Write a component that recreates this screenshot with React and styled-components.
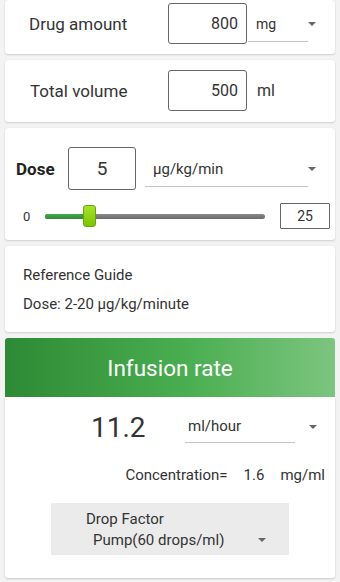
import React from 'react'
import styled, { createGlobalStyle } from 'styled-components'

const Global = createGlobalStyle`
  html, body {
    margin: 0;
    padding: 0;
    background: #f3f3f3;
    font-family: Roboto, "Liberation Sans", sans-serif;
    color: #333;
  }
`;

const Page = styled.div`
  width: 340px;
  height: 582px;
  overflow: hidden;
  padding: 0 5px;
  box-sizing: border-box;
  display: flex;
  flex-direction: column;
  gap: 6px;
`;

const Card = styled.div`
  background: #fff;
  border-radius: 3px;
  box-shadow: 0 1px 2px rgba(0, 0, 0, 0.14), 0 0 1px rgba(0, 0, 0, 0.1);
  padding: ${p => p.$pad || '10px 0'};
  display: flex;
  flex-direction: column;
`;

const Row = styled.div`
  display: flex;
  align-items: center;
  padding-left: ${p => p.$left || 24}px;
`;

const Label = styled.div`
  width: ${p => p.$w}px;
  font-size: 17px;
  font-weight: ${p => (p.$bold ? 700 : 400)};
  color: ${p => (p.$bold ? '#222' : '#333')};
`;

const NumBox = styled.div`
  width: ${p => p.$w}px;
  height: ${p => p.$h}px;
  box-sizing: border-box;
  border: 1px solid #666;
  border-radius: 3px;
  display: flex;
  align-items: center;
  justify-content: ${p => p.$align || 'flex-end'};
  padding: 0 8px;
  font-size: ${p => p.$size || 16}px;
  color: #333;
`;

const Select = styled.div`
  display: flex;
  align-items: center;
  margin-left: ${p => p.$ml || 1}px;
`;

const SelectField = styled.div`
  width: ${p => p.$w}px;
  box-sizing: border-box;
  padding: 0 0 ${p => p.$pb || 8}px ${p => p.$pl || 8}px;
  margin-top: ${p => p.$mt ?? 10}px;
  border-bottom: 1px solid #c4c4c4;
  font-size: ${p => p.$size || 15}px;
  line-height: 18px;
  color: #333;
`;

const Arrow = styled.span`
  width: 0;
  height: 0;
  border-left: 4px solid transparent;
  border-right: 4px solid transparent;
  border-top: 4px solid #666;
  margin-left: ${p => p.$ml || 0}px;
  margin-top: ${p => p.$mt || 0}px;
`;

const Unit = styled.span`
  margin-left: 10px;
  font-size: 16px;
  color: #333;
`;

const SliderRow = styled.div`
  display: flex;
  align-items: center;
  padding-left: 18px;
  margin-top: 13px;
`;

const SliderMin = styled.span`
  font-size: 13px;
  color: #333;
  width: 22px;
`;

const Track = styled.div`
  position: relative;
  width: 220px;
  height: 5px;
  border-radius: 3px;
  background: linear-gradient(#8a8a8a, #6a6a6a);
`;

const TrackFill = styled.div`
  height: 100%;
  border-radius: 3px;
  background: linear-gradient(#48a94b, #2f8a35);
`;

const Thumb = styled.div`
  position: absolute;
  top: -9px;
  width: 13px;
  height: 22px;
  box-sizing: border-box;
  border: 1px solid #6aa30a;
  border-radius: 3px;
  background: linear-gradient(#a6e22e, #7cc400);
`;

const MaxBox = styled(NumBox)`
  margin-left: 15px;
  justify-content: center;
  border-radius: 1px;
  font-size: 14px;
`;

const Note = styled.div`
  font-size: 15px;
  color: #333;
  padding-left: 18px;
  line-height: 29px;
`;

const ResultHeader = styled.div`
  height: 59px;
  border-radius: 3px 3px 0 0;
  background: linear-gradient(90deg, #2e8a35 0%, #4aae50 55%, #7cc57f 100%);
  display: flex;
  align-items: center;
  justify-content: center;
  color: #fff;
  font-size: 22.5px;
`;

const ResultBody = styled.div`
  background: #fff;
  border-radius: 0 0 3px 3px;
  box-shadow: 0 1px 2px rgba(0, 0, 0, 0.18);
  height: 181px;
  display: flex;
  flex-direction: column;
`;

const RateRow = styled.div`
  display: flex;
  align-items: flex-start;
  padding: 14px 0 0 86px;
`;

const Rate = styled.div`
  font-size: 28px;
  line-height: 33px;
  color: #333;
  width: 89px;
`;

const ConcRow = styled.div`
  display: flex;
  justify-content: flex-end;
  padding: 22px 10px 0 0;
  font-size: 15px;
  line-height: 18px;
  color: #333;
  gap: 16px;
`;

const DropBox = styled.div`
  margin: 19px 0 0 46px;
  width: 238px;
  height: 52px;
  background: #ebebeb;
  box-sizing: border-box;
  padding: 7px 0 0 35px;
  font-size: 15px;
  line-height: 18px;
  color: #333;
`;

const DropValue = styled.div`
  display: flex;
  align-items: center;
  padding: 3px 0 0 7px;
`;

const App = () => {
  const min = 0
  const max = 25
  const dose = 5
  const trackWidth = 220
  const pos = ((dose - min) / (max - min)) * trackWidth

  return (
    <>
      <Global />
      <Page>
        <Card $pad="3px 0 10px">
          <Row>
            <Label $w={139}>Drug amount</Label>
            <NumBox $w={79} $h={41}>800</NumBox>
            <Select>
              <SelectField $w={60} $size={14}>mg</SelectField>
              <Arrow />
            </Select>
          </Row>
        </Card>
        <Card $pad="10px 0 11px">
          <Row $left={25}>
            <Label $w={138}>Total volume</Label>
            <NumBox $w={79} $h={41}>500</NumBox>
            <Unit>ml</Unit>
          </Row>
        </Card>
        <Card $pad="19px 0 11px">
          <Row $left={11}>
            <Label $w={52} $bold>Dose</Label>
            <NumBox $w={68} $h={43} $align="center" $size={19}>5</NumBox>
            <Select $ml={9}>
              <SelectField $w={163}>µg/kg/min</SelectField>
              <Arrow />
            </Select>
          </Row>
          <SliderRow>
            <SliderMin>0</SliderMin>
            <Track>
              <TrackFill style={{ width: `${pos}px` }} />
              <Thumb style={{ left: `${pos - 6.5}px` }} />
            </Track>
            <MaxBox $w={50} $h={26}>25</MaxBox>
          </SliderRow>
        </Card>
        <Card $pad="15px 0 13px">
          <Note>Reference Guide</Note>
          <Note>Dose: 2-20 µg/kg/minute</Note>
        </Card>
        <div>
          <ResultHeader>Infusion rate</ResultHeader>
          <ResultBody>
            <RateRow>
              <Rate>11.2</Rate>
              <Select $ml={5}>
                <SelectField $w={110} $mt={6} $pb={7} $pl={3}>ml/hour</SelectField>
                <Arrow $ml={14} />
              </Select>
            </RateRow>
            <ConcRow>
              <span>Concentration=</span>
              <span>1.6</span>
              <span>mg/ml</span>
            </ConcRow>
            <DropBox>
              Drop Factor
              <DropValue>
                Pump(60 drops/ml)
                <Arrow $ml={34} />
              </DropValue>
            </DropBox>
          </ResultBody>
        </div>
      </Page>
    </>
  )
}

export default App
